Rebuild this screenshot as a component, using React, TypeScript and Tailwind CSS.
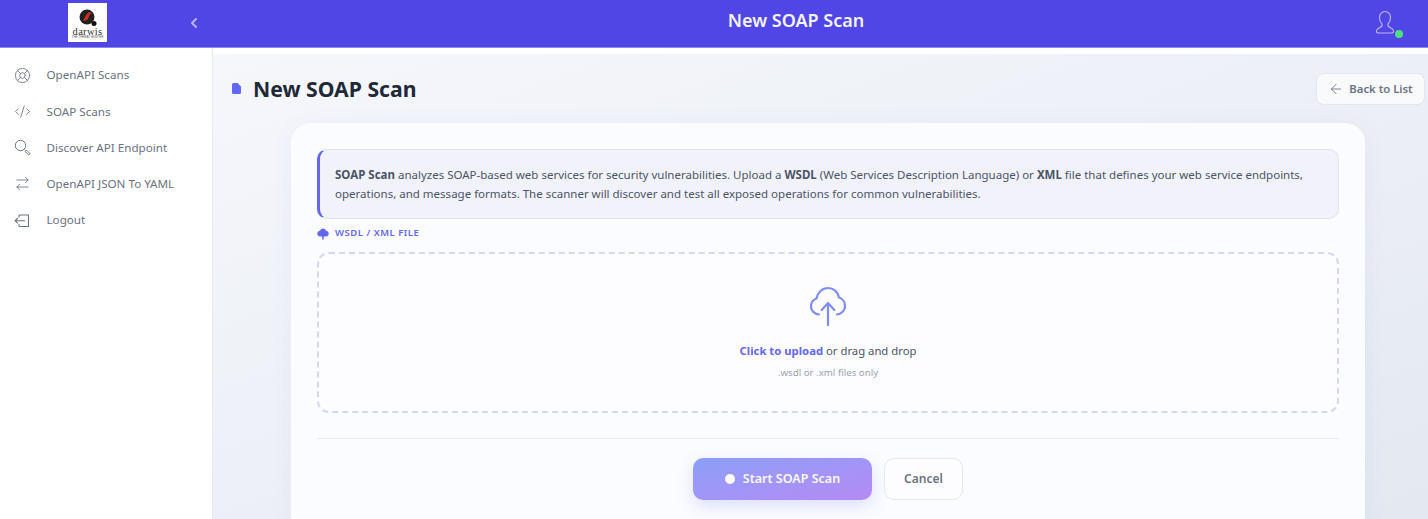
import { ArrowLeft, ArrowRightLeft, CodeXml, LifeBuoy, ChevronLeft } from "lucide-react";

const navItems = [
  { label: "OpenAPI Scans", icon: "scan" },
  { label: "SOAP Scans", icon: "code" },
  { label: "Discover API Endpoint", icon: "search" },
  { label: "OpenAPI JSON To YAML", icon: "swap" },
  { label: "Logout", icon: "logout" },
];

function NavIcon({ icon }: { icon: string }) {
  const cls = "h-[17px] w-[17px] text-[#6b7280]";
  if (icon === "scan") return <LifeBuoy className={cls} strokeWidth={1.2} />;
  if (icon === "code") return <CodeXml className={cls} strokeWidth={1.2} />;
  if (icon === "search")
    return (
      <svg viewBox="0 0 17 17" className={cls} fill="none" stroke="currentColor" strokeWidth="1">
        <circle cx="6.500" cy="6.500" r="5.200" />
        <path d="M10.500 10.500 11.500 11.500M11.200 12.600l1.400-1.400 3 3a1 1 0 0 1-1.400 1.400z" />
      </svg>
    );
  if (icon === "swap") return <ArrowRightLeft className={cls} strokeWidth={1.2} />;
  return (
    <svg viewBox="0 0 17 17" className={cls} fill="none" stroke="currentColor" strokeWidth="1.1">
      <path d="M5 3h9.5v11.5H5M5 3v2.5M5 14.5V12M11 8.7H1.2M3.8 6 1.2 8.7l2.6 2.6" />
    </svg>
  );
}

function Logo() {
  return (
    <div className="flex h-[39px] w-[39px] flex-col items-center bg-white pt-[6px]">
      <svg viewBox="0 0 20 20" className="h-[20px] w-[20px]">
        <circle cx="9" cy="8" r="7.5" fill="#231f20" />
        <path d="M5 11c2-1 2-5 6-8 1 0 2 1 3 1-3 1-3 5-5 7-1 .8-3 .6-4 0z" fill="#c8321f" />
        <circle cx="16" cy="14.500" r="2.500" fill="#111" />
      </svg>
      <span className="mt-[-2px] font-['Liberation_Serif',serif] text-[10.500px] leading-[9px] tracking-[0.3px] text-[#333]">
        darwis
      </span>
      <span className="font-['Liberation_Sans',sans-serif] text-[3px] leading-[3px] text-[#555]">
        THE THREAT HUNTER
      </span>
    </div>
  );
}

export default function App() {
  return (
    <div className="flex h-[519px] flex-col overflow-hidden bg-white font-['Noto_Sans',sans-serif]">
      <header className="flex h-[48px] shrink-0 items-center border-b border-[#8f88f0] bg-[#4f46e5] pb-[2px]">
        <div className="ml-[68px] shrink-0">
          <Logo />
        </div>
        <ChevronLeft className="ml-[79px] h-[16px] w-[16px] text-[#b9b5f6]" strokeWidth={3} />
        <h1 className="mb-[4px] flex-1 pl-[15px] text-center text-[18px] font-semibold text-[#f3f3fe]">New SOAP Scan</h1>
        <div className="relative mr-[33px] h-[25px] w-[20px]">
          <svg viewBox="0 0 20 25" className="h-[25px] w-[20px] text-[#bcb8f7]" fill="none" stroke="currentColor" strokeWidth="1.1">
            <path d="M7 14c-1.500-1.500-2.500-4-2.500-6.500C4.500 4 7 1.500 10 1.500s5.500 2.500 5.500 6c0 2.500-1 5-2.500 6.500v2c1.500 1.500 5 2 5.500 4.500.3 1.500-.5 2.500-2 2.500H3.500c-1.500 0-2.300-1-2-2.500C2 18 5.500 17.500 7 16z" />
          </svg>
          <span className="absolute bottom-[-3px] right-[-8px] h-[8px] w-[8px] rounded-full bg-[#4ade80]" />
        </div>
      </header>
      <div className="flex min-h-0 flex-1">
        <aside className="w-[213px] shrink-0 border-r border-[#e5e7eb] bg-white pt-[9px]">
          {navItems.map((item) => (
            <div key={item.label} className="flex h-[36.250px] items-center pl-[14px]">
              <NavIcon icon={item.icon} />
              <span className="ml-[15.500px] text-[11.650px] text-[#6b7280]">{item.label}</span>
            </div>
          ))}
        </aside>
        <main className="min-w-0 flex-1 bg-white pt-[6px]">
          <div className="h-full bg-gradient-to-br from-[#f5f7fb] to-[#e4e8f1] pt-[19px] pl-[18px] pr-[3px]">
            <div className="flex h-[32px] items-center justify-between pl-[1px]">
              <div className="flex items-center">
                <svg viewBox="0 0 9 11" className="h-[11px] w-[9px] text-[#6366f1]" fill="currentColor">
                  <path d="M1.500 0H5.500L9 3.500V9.500A1.500 1.500 0 0 1 7.500 11H1.500A1.500 1.500 0 0 1 0 9.500V1.500A1.500 1.500 0 0 1 1.500 0Z" />
                </svg>
                <h2 className="ml-[12px] text-[21.200px] font-bold text-[#1f2937]">New SOAP Scan</h2>
              </div>
              <button className="flex h-[32px] w-[109px] items-center justify-center gap-[5px] rounded-[8px] border border-[#e5e7eb] bg-[#f9fafb] text-[11.300px] font-semibold text-[#6b7280]">
                <ArrowLeft className="h-[16px] w-[16px]" strokeWidth={1.3} />
                Back to List
              </button>
            </div>
            <section className="mx-auto mt-[18px] h-[420px] w-[1074px] rounded-[20px] bg-[#fbfcff] p-[26px] shadow-[0_4px_24px_rgba(99,102,241,0.06)]">
              <div className="h-[70px] rounded-[10px] border border-l-[3px] border-[#e0e0fb] border-l-[#6366f1] bg-[#f2f2fd] px-[15px] py-[15px] text-[11.500px] leading-[19px] text-[#4b5563]">
                <strong className="font-bold">SOAP Scan</strong> analyzes SOAP-based web services for security vulnerabilities. Upload a <strong className="font-bold">WSDL</strong> (Web Services Description Language) or <strong className="font-bold">XML</strong> file that defines your web service endpoints, operations, and message formats. The scanner will discover and test all exposed operations for common vulnerabilities.
              </div>
              <div className="mt-[8px] flex h-[13px] items-center">
                <svg viewBox="0 0 12 12" className="h-[12px] w-[12px] text-[#6366f1]" fill="currentColor">
                  <path d="M6 0.500C7.500 0.500 8.700 1.500 9 2.800 10.500 3 11.700 4.200 11.700 5.700 11.700 7.300 10.400 8.500 8.800 8.500H6.800V11.500H5.200V8.500H3.200C1.600 8.500 0.300 7.300 0.300 5.700 0.300 4.200 1.500 3 3 2.800 3.300 1.500 4.500 0.500 6 0.500Z" />
                </svg>
                <span className="ml-[6px] text-[9.500px] font-semibold tracking-[0.5px] text-[#6366f1]">WSDL / XML FILE</span>
              </div>
              <div className="mt-[12px] flex h-[161px] flex-col items-center rounded-[12px] border-2 border-dashed border-[#d6d6f7] bg-[#fdfdff]">
                <svg viewBox="0 0 36 40" className="mt-[32px] h-[40px] w-[36px] text-[#818cf8]" fill="none" stroke="currentColor" strokeWidth="2.200" strokeLinecap="round" strokeLinejoin="round">
                  <path d="M9 28.500C4 28 1 24.500 1 20.500C1 16.500 3.500 13.500 6.500 12.500C7.500 6.500 12.500 2 18 2C23.500 2 28 6 29 11.500C32.500 12.500 35 16 35 20C35 24.500 31.500 28 27 28.500" />
                  <path d="M18 39V17M11.700 24 18 17l6.300 7" />
                </svg>
                <p className="mt-[17px] text-[11.300px] text-[#4b5563]">
                  <span className="font-bold text-[#6366f1]">Click to upload</span> or drag and drop
                </p>
                <p className="mt-[6px] text-[9.700px] text-[#9ca3af]">.wsdl or .xml files only</p>
              </div>
              <div className="mt-[25px] flex justify-center gap-[12px] border-t border-[#e9ebf3] pt-[19px]">
                <button className="flex h-[42px] w-[179px] items-center justify-center gap-[8px] rounded-[10px] bg-gradient-to-br from-[#8b9ff8] to-[#b48af5] text-[12.500px] font-semibold text-[#f9f9ff] shadow-[0_6px_16px_rgba(129,140,248,0.25)]">
                  <span className="h-[10px] w-[10px] rounded-full bg-white" />
                  Start SOAP Scan
                </button>
                <button className="h-[42px] w-[79px] rounded-[10px] border border-[#e5e7eb] bg-[#fdfdff] text-[12px] font-semibold text-[#6b7280]">
                  Cancel
                </button>
              </div>
            </section>
          </div>
        </main>
      </div>
    </div>
  );
}
